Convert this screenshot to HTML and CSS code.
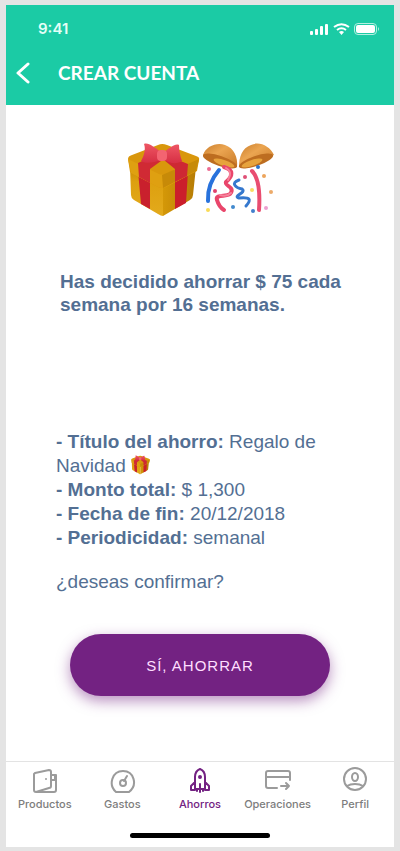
FILE: index.html
```html
<!DOCTYPE html>
<html lang="es">
<head>
<meta charset="utf-8">
<meta name="viewport" content="width=device-width, initial-scale=1">
<title>Crear cuenta</title>
<link rel="stylesheet" href="styles.css">
</head>
<body>
<svg width="0" height="0" class="defs" aria-hidden="true">
  <defs>
    <linearGradient id="gold-left" x1="0" y1="0" x2="0" y2="1"><stop offset="0" stop-color="#c98a05"/><stop offset=".3" stop-color="#dda00f"/><stop offset="1" stop-color="#e3aa1c"/></linearGradient>
    <linearGradient id="gold-right" x1="0" y1="0" x2="1" y2="0"><stop offset="0" stop-color="#d49808"/><stop offset="1" stop-color="#b67c05"/></linearGradient>
    <linearGradient id="bell" x1="0" y1="0" x2="1" y2="1"><stop offset="0" stop-color="#c97d2c"/><stop offset=".4" stop-color="#eba551"/><stop offset="1" stop-color="#c87927"/></linearGradient>
    <linearGradient id="bow" x1="0" y1="0" x2="0" y2="1"><stop offset="0" stop-color="#ee5664"/><stop offset="1" stop-color="#d62f43"/></linearGradient>
    <symbol id="gift" viewBox="0 0 80 90">
      <path d="M9 32L42 48V81Q40 81 37 79L13 65Q10 63 10 60Z" fill="url(#gold-left)"/>
      <path d="M42 48L75 32L72 60Q72 63 69 65L42 81Z" fill="url(#gold-right)"/>
      <path d="M17 36L29 42V74L20 69Z" fill="#c9202d"/>
      <path d="M54 43L67 36L65 68L54 74Z" fill="#cb1e2b"/>
      <path d="M7 24Q7 21 11 20L37 10Q41 8 46 10L75 21Q79 22 78 25L76 36L45 52Q41 54 37 52L9 37Z" fill="#d9970c"/>
      <path d="M7 24L38 39Q41 40 44 39L78 24L75 36L45 52Q41 54 37 52L10 38Z" fill="#dfa011"/>
      <path d="M41 40L78 24L75 36L42 53Z" fill="#c78a08"/>
      <path d="M17 28L30 22L40 26L29 34V48L18 42Z" fill="#d02a34"/>
      <path d="M43 25L52 23L67 29L66 41L54 47V34Z" fill="#ce2833"/>
      <path d="M40 17C33 12 27 7 23 9C25 14 23 21 20 26C24 29 33 28 39 25Z" fill="url(#bow)"/>
      <path d="M43 17C49 13 54 8 58 10C58 15 59 21 61 26C57 29 49 29 44 25Z" fill="url(#bow)"/>
      <rect x="36" y="15" width="10" height="11" rx="4" fill="#f36471"/>
    </symbol>
  </defs>
</svg>
<div class="phone">
  <header class="header">
    <div class="status">
      <span class="time">9:41</span>
      <svg class="signals" viewBox="0 0 70 14" aria-hidden="true">
        <g fill="#fff"><rect x="0" y="9" width="3" height="4" rx="1"/><rect x="5" y="7" width="3" height="6" rx="1"/><rect x="10" y="4" width="3" height="9" rx="1"/><rect x="15" y="2" width="3" height="11" rx="1"/></g>
        <g fill="none" stroke="#fff" stroke-width="2"><path d="M24 5Q31.500-.6 39 5"/><path d="M27 8Q31.500 4.600 36 8"/></g>
        <path d="M29 10Q31.500 8 34 10L31.500 13Z" fill="#fff"/>
        <rect x="44.500" y="1.500" width="22" height="11" rx="3.500" fill="none" stroke="#b4f0e1"/>
        <rect x="46" y="3" width="19" height="8" rx="2" fill="#fff"/><path d="M68 5Q70 7 68 9Z" fill="#b4f0e1"/>
      </svg>
    </div>
    <div class="titlebar">
      <button class="back" type="button" aria-label="Volver"><svg viewBox="0 0 14 22"><path d="M12 2L2 11L12 20"/></svg></button>
      <h1>CREAR CUENTA</h1>
    </div>
  </header>

  <main>
    <div class="hero">
      <svg viewBox="0 0 80 90" role="img" aria-label="Regalo"><use href="#gift"/></svg>
      <svg viewBox="0 0 80 90" role="img" aria-label="Confeti">
        <path d="M4 20C7 11 18 7 26 10C35 13 39 22 38 32Z" fill="url(#bell)"/>
        <ellipse cx="21" cy="26" rx="18" ry="5" transform="rotate(19 21 26)" fill="#bd6d20"/>
        <ellipse cx="25" cy="28" rx="11" ry="3" transform="rotate(19 25 28)" fill="#e7a33c"/>
        <path d="M75 20C71 11 60 6 52 10C43 13 40 22 40 32Z" fill="url(#bell)"/>
        <ellipse cx="57" cy="26" rx="18" ry="5" transform="rotate(-19 57 26)" fill="#bd6d20"/>
        <ellipse cx="53" cy="28" rx="11" ry="3" transform="rotate(-19 53 28)" fill="#e7a33c"/>
        <g fill="none" stroke-linecap="round">
          <path d="M20 35Q8 49 9 66" stroke="#2872dc" stroke-width="4"/>
          <path d="M25 32C35 35 34 41 27 47C25 51 37 52 31 59C27 62 16 59 18 65Q20 72 25 75" stroke="#e9466b" stroke-width="4"/>
          <path d="M27 33Q34 37 29 45M32 58Q28 62 21 60" stroke="#f6829b" stroke-width="2"/>
          <path d="M53 36Q62 45 60 75" stroke="#e94d70" stroke-width="4"/>
          <path d="M40 45C31 48 37 53 43 54C48 58 33 61 40 63C51 62 53 64 47 71" stroke="#3578ce" stroke-width="3"/>
        </g>
        <g><circle cx="10" cy="34" r="2" fill="#ed6b91"/><circle cx="16" cy="56" r="2" fill="#df426d"/><circle cx="9" cy="75" r="2" fill="#fadb57"/><circle cx="34" cy="72" r="2" fill="#428ace"/><circle cx="46" cy="42" r="2" fill="#df5077"/><circle cx="53" cy="55" r="2" fill="#f9dc60"/><circle cx="59" cy="32" r="2" fill="#2d73c8"/><circle cx="65" cy="41" r="2" fill="#eda55c"/><circle cx="72" cy="57" r="2" fill="#ecaa69"/><circle cx="67" cy="73" r="2" fill="#eca0d0"/><circle cx="54" cy="76" r="2" fill="#427fcc"/></g>
      </svg>
    </div>
    <p class="summary">Has decidido ahorrar $ 75 cada semana por 16 semanas.</p>
    <div class="details">
      <p><b>- Título del ahorro:</b> <span>Regalo de</span> <span>Navidad</span> <svg class="mini" viewBox="6 7 73 76" role="img" aria-label="Regalo"><use href="#gift" width="80" height="90"/></svg></p>
      <p><b>- Monto total:</b> $ 1,300</p>
      <p><b>- Fecha de fin:</b> 20/12/2018</p>
      <p><b>- Periodicidad:</b> semanal</p>
      <p class="question">¿deseas confirmar?</p>
    </div>
    <button class="confirm" type="button">SÍ, AHORRAR</button>
  </main>

  <footer>
    <nav class="tabs">
      <a href="#productos"><svg viewBox="0 0 28 28"><path d="M4 6L18 3Q20 3 20 5V19Q20 21 18 21L5 25Q3 25 3 23V7ZM5 25H23Q25 25 25 23V8H21M20 13H24V9"/><circle cx="15" cy="12" r="1" class="dot"/></svg><span>Productos</span></a>
      <a href="#gastos"><svg viewBox="0 0 28 28"><path d="M8 25H21C30 18 26 4 15 4S0 18 8 25ZM16 14L19 9"/><circle cx="15" cy="16" r="3"/></svg><span>Gastos</span></a>
      <a href="#ahorros" class="active" aria-current="page"><svg viewBox="0 0 28 28"><path d="M9 22V10Q9 4 14 2Q19 4 19 10V22ZM9 15L5 19V23H9M19 15L23 19V23H19M14 17V25M11 22V24M17 22V24"/><circle cx="14" cy="10" r="1"/></svg><span>Ahorros</span></a>
      <a href="#operaciones"><svg viewBox="0 0 28 28"><path d="M13 21H4Q2 21 2 19V6Q2 4 4 4H24Q26 4 26 6V13M2 10H26M17 19H25M22 16L25 19L22 22"/></svg><span>Operaciones</span></a>
      <a href="#perfil"><svg viewBox="0 0 28 28"><circle cx="14" cy="12" r="11"/><ellipse cx="14" cy="10" rx="3" ry="4"/><path d="M6 19Q9 17 14 17T22 19"/></svg><span>Perfil</span></a>
    </nav>
    <div class="home"></div>
  </footer>
</div>
</body>
</html>
```
FILE: styles.css
```css
* { box-sizing: border-box; }
body { margin: 0; padding: 5px 6px 4px; background: #e4e4e4; font-family: "Liberation Sans", sans-serif; }
button { border: 0; font: inherit; cursor: pointer; }
h1, p { margin: 0; }
.defs { display: block; height: 0; }
.phone { min-height: calc(100vh - 9px); display: flex; flex-direction: column; background: #fff; }
.header { height: 100px; padding-top: 16px; background: #1bcba5; color: #fff; }
.status { display: flex; align-items: center; justify-content: space-between; height: 16px; padding: 0 14px 0 32px; }
.time { font: 600 15px/16px Inter, sans-serif; color: #e3fff7; }
.signals { width: 70px; height: 14px; }
.titlebar { display: flex; align-items: center; height: 24px; margin-top: 24px; }
.back { display: flex; width: 52px; height: 24px; padding: 1px 10px; background: none; }
.back svg { width: 14px; height: 22px; fill: none; stroke: #fff; stroke-width: 3px; stroke-linecap: round; stroke-linejoin: round; }
h1 { font: 700 19px/24px Lato, sans-serif; }
main { flex: 1; display: flex; flex-direction: column; padding: 30px 50px 0; color: #536f93; }
.hero { display: flex; justify-content: center; }
.hero svg { width: 80px; height: 90px; flex: none; }
.hero svg + svg { margin-left: -2px; }
.summary { margin: 45px 0 0 4px; font-size: 19px; line-height: 23px; font-weight: 700; }
.details { margin-top: 114px; font-size: 19px; line-height: 24px; }
.mini { width: 19px; height: 20px; vertical-align: -3px; }
.question { margin-top: 20px; }
.confirm { width: 260px; max-width: 100%; height: 62px; margin: 40px auto 0; border-radius: 32px; background: #732282; color: #ffdfff; font-size: 15px; letter-spacing: 1px; box-shadow: 0 5px 14px #73228280; }
footer { border-top: 1px solid #e3e3e3; }
.tabs { display: grid; grid-template-columns: repeat(5, 1fr); }
.tabs a { display: flex; flex-direction: column; align-items: center; padding-top: 5px; color: #7d7d7d; text-decoration: none; font: 500 11px/14px Inter, sans-serif; }
.tabs svg { width: 28px; height: 28px; margin-bottom: 2px; fill: none; stroke: #9b9b9b; stroke-width: 2px; stroke-linecap: round; stroke-linejoin: round; }
.tabs .active { color: #732282; }
.tabs .active svg { stroke: #732282; }
.tabs .dot { fill: #9b9b9b; stroke: none; }
.home { width: 140px; height: 5px; margin: 22px auto 9px; border-radius: 3px; background: #000; }
```
